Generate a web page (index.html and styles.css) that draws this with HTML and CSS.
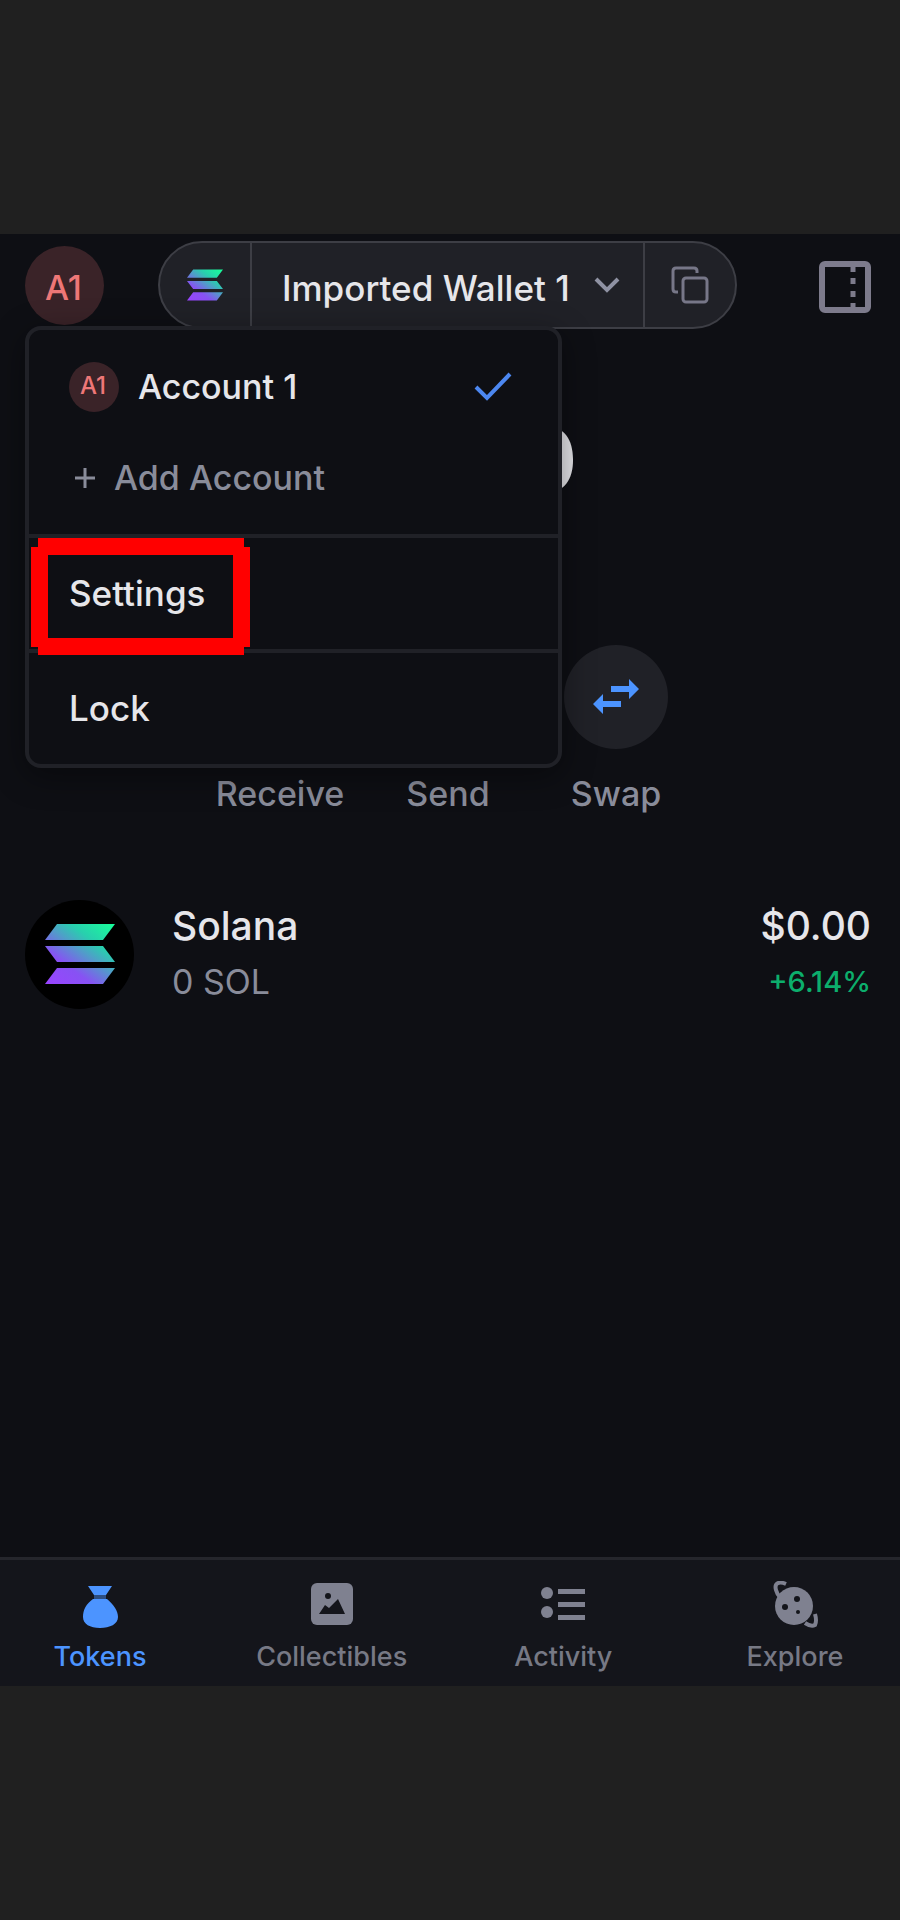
FILE: index.html
```html
<!DOCTYPE html>
<html lang="en">
<head>
<meta charset="utf-8">
<meta name="viewport" content="width=device-width, initial-scale=1">
<title>Wallet</title>
<link rel="stylesheet" href="styles.css">
</head>
<body>
<svg class="defs" width="0" height="0" aria-hidden="true">
  <defs>
    <linearGradient id="sol" gradientUnits="userSpaceOnUse" x1="10" y1="64" x2="60" y2="-4">
      <stop offset="0" stop-color="#9945ff"/>
      <stop offset=".3" stop-color="#8752f3"/>
      <stop offset=".55" stop-color="#4f9fc8"/>
      <stop offset=".72" stop-color="#28cfae"/>
      <stop offset="1" stop-color="#19fb9b"/>
    </linearGradient>
    <symbol id="solana" viewBox="0 0 70 60">
      <path fill="url(#sol)" d="M12 0H70L58 16H0ZM0 22H58L70 38H12ZM12 44H70L58 60H0Z"/>
    </symbol>
  </defs>
</svg>
<div class="app">
  <header class="header">
    <div class="account">
      <button class="avatar" type="button" aria-haspopup="menu" aria-expanded="true">A1</button>
      <div class="menu" role="menu">
        <div class="menu-group">
          <button class="menu-item" type="button" role="menuitem">
            <span class="avatar avatar-small">A1</span>
            <span class="menu-label">Account 1</span>
            <svg class="check" viewBox="0 0 38 30" aria-hidden="true"><path d="M2 15L13 26L36 2" fill="none" stroke="#4c87f0" stroke-width="4"/></svg>
          </button>
          <button class="menu-item menu-add" type="button" role="menuitem">
            <svg class="plus" viewBox="0 0 20 20" aria-hidden="true"><path d="M10 0V20M0 10H20" stroke="currentColor" stroke-width="3"/></svg>
            <span class="menu-label">Add Account</span>
          </button>
        </div>
        <button class="menu-item menu-single" type="button" role="menuitem">Settings
          <svg class="highlight" viewBox="0 0 219 117" aria-hidden="true"><path fill="#f00" fill-rule="evenodd" d="M7 0H213V9H219V109H213V117H7V109H0V9H7ZM17 17V100H202V17Z"/></svg>
        </button>
        <button class="menu-item menu-single" type="button" role="menuitem">Lock</button>
      </div>
    </div>
    <div class="pill">
      <button class="pill-end" type="button" aria-label="Network"><svg class="sol-small" aria-hidden="true"><use href="#solana"/></svg></button>
      <button class="pill-wallet" type="button">Imported Wallet 1
        <svg class="chevron" viewBox="0 0 26 16" aria-hidden="true"><path d="M2 2L13 13L24 2" fill="none" stroke="#8f92a3" stroke-width="4"/></svg>
      </button>
      <button class="pill-end" type="button" aria-label="Copy address">
        <svg class="copy" viewBox="0 0 38 38" fill="none" stroke="#777788" stroke-width="3" aria-hidden="true"><rect x="12" y="12" width="24" height="24" rx="3"/><path d="M26 7V5Q26 2 23 2H5Q2 2 2 5V23Q2 26 5 26H7"/></svg>
      </button>
    </div>
    <button class="panel" type="button" aria-label="Open side panel">
      <svg viewBox="0 0 52 52" fill="none" stroke="#7d7b8c" aria-hidden="true"><rect x="3" y="3" width="46" height="46" rx="3" stroke-width="6"/><path d="M34 5V11M34 17V23M34 30V36M34 42V48" stroke-width="5"/></svg>
    </button>
  </header>
  <main>
    <p class="balance">$0.00</p>
    <div class="actions">
      <button class="action" type="button"><span class="disc"></span>Receive</button>
      <button class="action" type="button"><span class="disc"></span>Send</button>
      <button class="action" type="button"><span class="disc"><svg class="swap" viewBox="0 0 46 36" aria-hidden="true"><path fill="#4c94ff" d="M18 7H36V0L46 10L36 20V13H18ZM28 28H10V35L0 25L10 15V22H28Z"/></svg></span>Swap</button>
    </div>
    <a class="token" href="#solana-token">
      <span class="token-icon"><svg class="sol-large" aria-hidden="true"><use href="#solana"/></svg></span>
      <span class="token-col"><span class="token-main">Solana</span><span class="token-sub">0 SOL</span></span>
      <span class="token-col token-value"><span class="token-main">$0.00</span><span class="token-change">+6.14%</span></span>
    </a>
  </main>
  <nav class="nav">
    <a class="tab tab-active" href="#tokens">
      <svg viewBox="0 0 48 48" fill="currentColor" aria-hidden="true"><path d="M12 5H36L30 14H18ZM17 18H31C38 24 42 30 42 36C42 43 34 47 24 47S7 43 7 36C7 29 10 23 17 18Z"/><path d="M18 14H30V18H18Z" opacity=".45"/></svg>
      Tokens</a>
    <a class="tab" href="#collectibles">
      <svg viewBox="0 0 48 48" aria-hidden="true"><rect x="3" y="2" width="42" height="42" rx="6" fill="#7f8190"/><path d="M11 33L17 24L21 27L30 18L37 33Z" fill="#14151b"/><circle cx="20" cy="15" r="3" fill="#14151b"/></svg>
      Collectibles</a>
    <a class="tab" href="#activity">
      <svg viewBox="0 0 48 48" fill="#7f8190" aria-hidden="true"><circle cx="8" cy="12" r="6"/><circle cx="8" cy="31" r="6"/><path d="M19 8H46V13H19ZM19 21H46V26H19ZM19 34H46V39H19Z"/></svg>
      Activity</a>
    <a class="tab" href="#explore">
      <svg viewBox="0 0 48 48" aria-hidden="true"><circle cx="23" cy="25" r="19" fill="#7f8190"/><path d="M15 3C8 0 3 2 5 9Q6 13 9 16M34 42Q40 46 44 44Q46 40 44 33" fill="none" stroke="#7f8190" stroke-width="4"/><circle cx="26" cy="18" r="3" fill="#14151b"/><circle cx="14" cy="26" r="3" fill="#14151b"/><circle cx="27" cy="31" r="2" fill="#14151b"/></svg>
      Explore</a>
  </nav>
</div>
</body>
</html>
```
FILE: styles.css
```css
* { box-sizing: border-box; }

body {
  margin: 0;
  min-height: 100vh;
  display: flex;
  flex-direction: column;
  background: #202020;
  color: #e6e6ea;
  font: 500 34px/44px Inter, "Liberation Sans", sans-serif;
}

button {
  margin: 0;
  padding: 0;
  border: 0;
  background: none;
  color: inherit;
  font: inherit;
  cursor: pointer;
}

a { color: inherit; text-decoration: none; }
svg { display: block; flex: none; }
.defs { position: absolute; }

.app {
  flex: 1;
  display: flex;
  flex-direction: column;
  margin: 234px 0;
  background: #0e0f14;
}

.header {
  display: flex;
  align-items: center;
  padding: 7px 29px 0 25px;
}

.account { position: relative; z-index: 2; }

.avatar {
  display: flex;
  align-items: center;
  justify-content: center;
  width: 79px;
  height: 79px;
  border-radius: 50%;
  background: #3a2328;
  color: #ee7777;
  padding: 6px 2px 0 0;
}

.avatar-small {
  width: 50px;
  height: 50px;
  padding: 0 2px 2px 0;
  font-size: 24px;
}

.menu {
  position: absolute;
  top: 80px;
  left: 0;
  width: 537px;
  border: 4px solid #202127;
  border-radius: 16px;
  background: #0e0f14;
  box-shadow: 0 8px 32px rgba(0, 0, 0, .4);
}

.menu-group { padding: 12px 0 10px; }

.menu-item {
  position: relative;
  display: flex;
  align-items: center;
  width: 100%;
  height: 91px;
  padding: 0 46px 0 40px;
  gap: 19px;
  text-align: left;
}

.menu-add { padding-left: 46px; color: #898c9a; }
.menu-single { height: 115px; border-top: 4px solid #202127; font-size: 35px; }
.check { width: 38px; height: 30px; margin-left: auto; }
.plus { width: 20px; height: 20px; }

.highlight {
  position: absolute;
  top: 0;
  left: 2px;
  width: 219px;
  height: 117px;
  z-index: 1;
}

.pill {
  display: flex;
  height: 88px;
  margin-left: 54px;
  border: 2px solid #3d3e45;
  border-radius: 44px;
  background: #202127;
}

.pill-end {
  display: flex;
  align-items: center;
  justify-content: center;
  width: 90px;
}

.pill-wallet {
  display: flex;
  align-items: center;
  gap: 24px;
  padding: 6px 23px 0 30px;
  border: solid #3d3e45;
  border-width: 0 2px;
  font-size: 35px;
}

.sol-small { width: 36px; height: 32px; }
.chevron { width: 26px; height: 16px; margin-bottom: 6px; }
.copy { width: 38px; height: 38px; }
.panel { margin-left: auto; padding-top: 4px; }
.panel svg { width: 52px; height: 52px; }

.balance {
  margin: 81px 0 135px;
  text-align: center;
  font-size: 86px;
  font-weight: 700;
  line-height: 100px;
}

.actions {
  display: flex;
  justify-content: center;
  padding-right: 4px;
}

.action {
  display: flex;
  flex-direction: column;
  align-items: center;
  gap: 23px;
  width: 168px;
  color: #898c9a;
}

.disc {
  display: flex;
  align-items: center;
  justify-content: center;
  width: 104px;
  height: 104px;
  border-radius: 50%;
  background: #202127;
}

.swap { width: 46px; height: 36px; }

.token {
  display: flex;
  align-items: center;
  gap: 38px;
  margin-top: 82px;
  padding: 0 29px 0 25px;
}

.token-icon {
  display: flex;
  align-items: center;
  justify-content: center;
  width: 109px;
  height: 109px;
  border-radius: 50%;
  background: #000;
}

.sol-large { width: 70px; height: 60px; }
.token-col { display: flex; flex-direction: column; line-height: 56px; }
.token-value { margin-left: auto; text-align: right; }
.token-main { font-size: 39px; }
.token-sub { color: #898c9a; font-weight: 400; }
.token-change { color: #0cae6c; font-size: 29px; }

.nav {
  display: flex;
  justify-content: space-between;
  margin-top: auto;
  padding: 21px 15px 13px 10px;
  border-top: 3px solid #25262c;
  background: #14151b;
}

.tab {
  display: flex;
  flex-direction: column;
  align-items: center;
  gap: 12px;
  width: 180px;
  color: #777985;
  font-size: 27px;
  line-height: 32px;
}

.tab svg { width: 48px; height: 48px; }
.tab-active { color: #4c94ff; }
```
